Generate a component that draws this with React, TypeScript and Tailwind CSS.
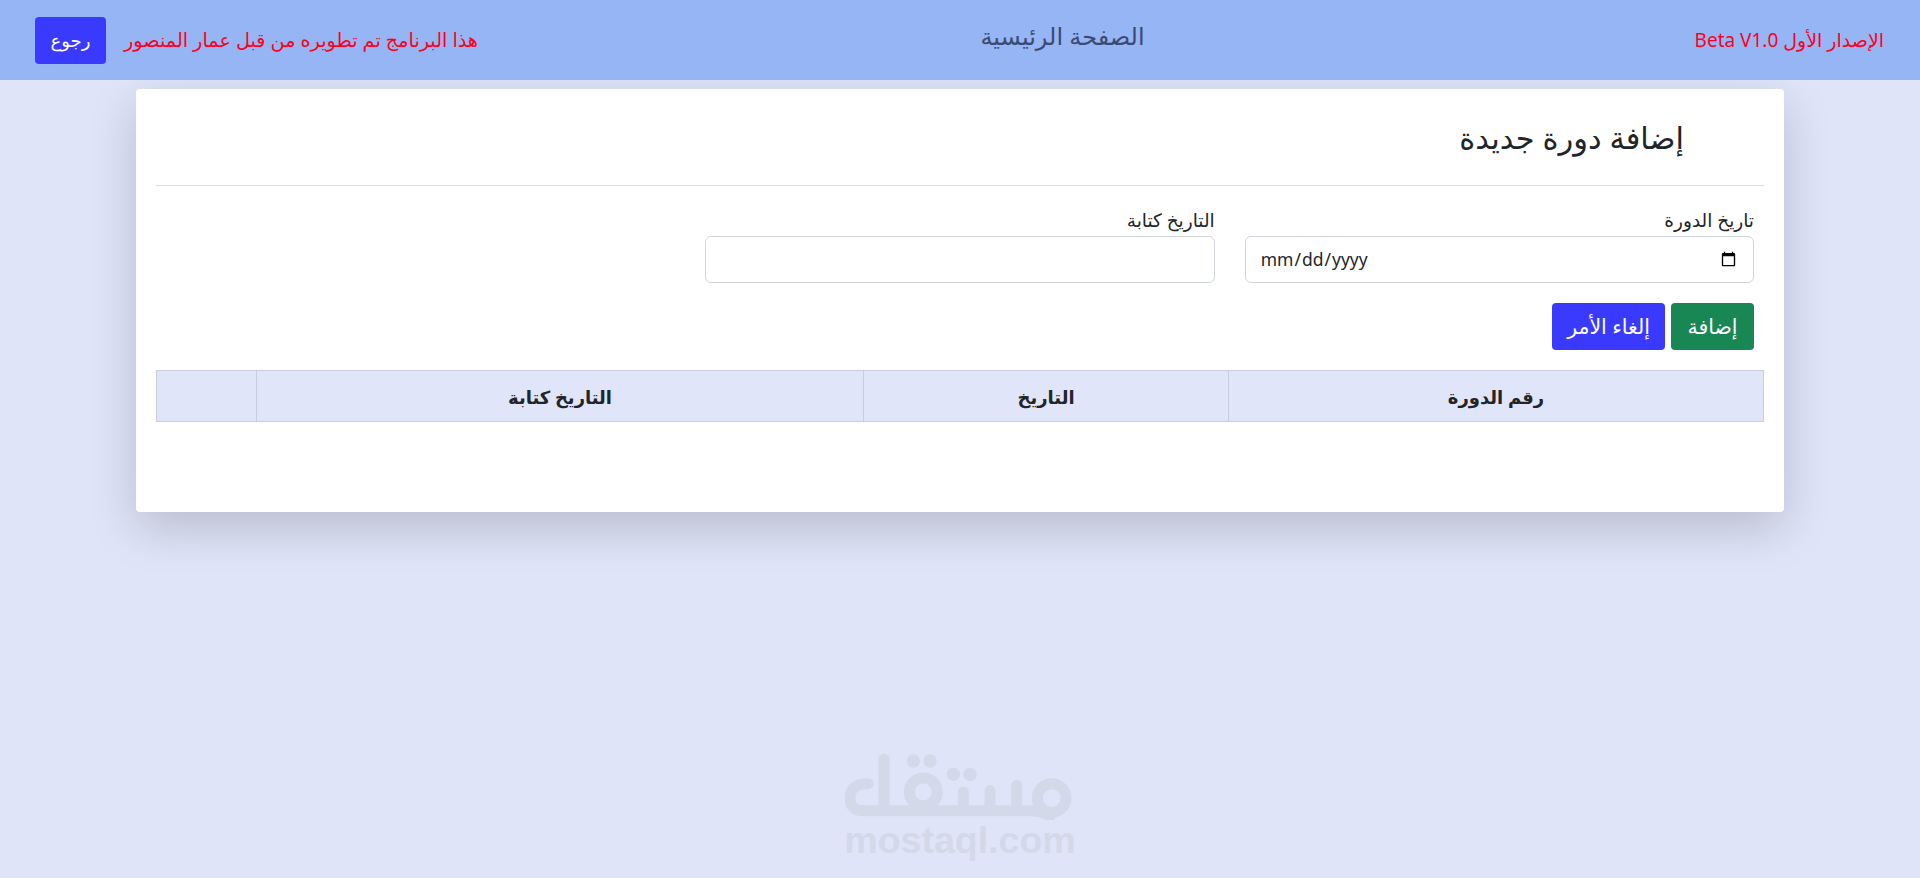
export default function App() {
  const headers = [
    { label: 'رقم الدورة', width: 'w-[535px]' },
    { label: 'التاريخ', width: 'w-[365px]' },
    { label: 'التاريخ كتابة', width: 'w-[607px]' },
    { label: '', width: '' },
  ];

  return (
    <div dir="rtl" className="relative h-[878px] overflow-hidden bg-[#dfe4f8] font-['Noto_Sans','DejaVu_Sans',sans-serif] text-[#212529]">
      <header className="relative z-10 flex h-20 items-center justify-between bg-[#96b5f5] pl-[35px] pr-9">
        <span className="w-[238px] text-[19px] text-[#ff0022]">الإصدار الأول Beta V1.0</span>
        <h1 className="mb-2 text-2xl font-normal text-[#3b4a72]">الصفحة الرئيسية</h1>
        <div className="flex w-[444px] items-center justify-end gap-[18px]">
          <span className="whitespace-nowrap text-[19.25px] text-[#ff0022]">هذا البرنامج تم تطويره من قبل عمار المنصور</span>
          <button className="h-[47px] w-[71px] shrink-0 rounded bg-[#3a3aff] text-lg text-white">رجوع</button>
        </div>
      </header>

      <main className="relative z-0 mx-[136px] mt-[9px] h-[423px] rounded bg-white px-5 shadow-[0_16px_48px_rgba(0,0,0,0.175)]">
        <h2 className="h-[97px] border-b border-[#dcdde3] pr-20 pt-7 text-[30.5px] font-normal leading-10">إضافة دورة جديدة</h2>

        <div className="grid grid-cols-3 gap-x-[30px] px-2.5 pt-[22px]">
          <label className="flex flex-col">
            <span className="h-7 text-[18.5px] leading-6">تاريخ الدورة</span>
            <input type="date" dir="ltr" className="h-[47px] rounded-md border border-[#ced4da] bg-white px-3.5 text-[17.5px]" />
          </label>
          <label className="flex flex-col">
            <span className="h-7 text-[18.5px] leading-6">التاريخ كتابة</span>
            <input type="text" className="h-[47px] rounded-md border border-[#ced4da] bg-white px-3.5 text-[17.5px]" />
          </label>
        </div>

        <div className="flex gap-1.5 px-2.5 pt-5">
          <button className="h-[47px] w-[83px] rounded bg-[#198754] text-[20.5px] text-white">إضافة</button>
          <button className="h-[47px] w-[113px] rounded bg-[#3a3aff] text-[20.5px] text-white">إلغاء الأمر</button>
        </div>

        <div className="mt-5 flex h-[52px] border border-[#c9cde3] bg-[#e0e5f9]">
          {headers.map((h, i) => (
            <div
              key={i}
              className={`flex items-center justify-center border-[#c9cde3] pt-px text-lg font-bold ${h.width || 'flex-1'} ${i < 3 ? 'border-l' : ''}`}
            >
              {h.label}
            </div>
          ))}
        </div>
      </main>

      {/* watermark */}
      <div className="absolute bottom-[18px] left-[845px] flex w-[230px] flex-col items-center text-[#d4d9e9]">
        <svg width="230" height="68" viewBox="75 70 690 204" fill="none" stroke="currentColor" strokeWidth="33" strokeLinecap="round" strokeLinejoin="round">
          <circle cx="695" cy="208" r="43" />
          <circle cx="310" cy="190" r="42" />
          <path d="M130 246H625Q665 246 690 262" />
          <path d="M590 170V240M510 185V240M430 190V240M192 92V240" />
          <path d="M145 165Q90 165 90 208Q90 246 130 246" />
          <circle cx="280" cy="97" r="20" fill="currentColor" stroke="none" />
          <circle cx="330" cy="97" r="20" fill="currentColor" stroke="none" />
          <circle cx="400" cy="137" r="20" fill="currentColor" stroke="none" />
          <circle cx="450" cy="137" r="20" fill="currentColor" stroke="none" />
        </svg>
        <span dir="ltr" className="font-['Liberation_Sans',sans-serif] text-[37.5px] font-bold leading-[40px]">mostaql.com</span>
      </div>
    </div>
  );
}
